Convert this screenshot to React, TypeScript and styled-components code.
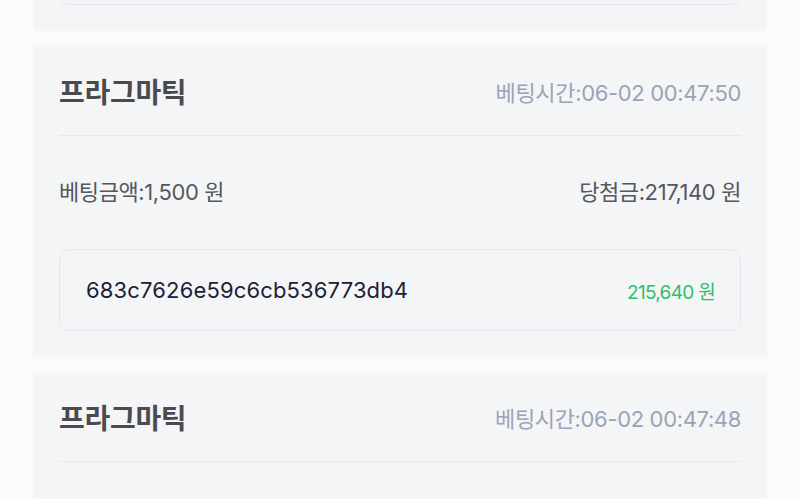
import React from 'react';
import styled, {createGlobalStyle} from "styled-components";

const GlobalStyle = createGlobalStyle`
  html, body {
    margin: 0;
    padding: 0;
    background: #fafbfc;
    overflow: hidden;
  }
  body {
    font-family: Inter, "Noto Sans CJK KR", "Noto Sans", sans-serif;
  }
`

type Bet = {
    id: string;
    game: string;
    time: string;
    stake: string;
    prize: string;
    win: string;
}

const bets: Bet[] = [
    {id: "683c7626e59c6cb536773db5", game: "프라그마틱", time: "06-02 00:47:52", stake: "1,500", prize: "3,000", win: "1,500"},
    {id: "683c7626e59c6cb536773db4", game: "프라그마틱", time: "06-02 00:47:50", stake: "1,500", prize: "217,140", win: "215,640"},
    {id: "683c7620e59c6cb536773da1", game: "프라그마틱", time: "06-02 00:47:48", stake: "1,500", prize: "0", win: "0"},
];

const App = () => {
    return (
        <>
            <GlobalStyle/>
            <Page>
                <List>
                    {bets.map((bet) => (
                        <Card key={bet.id}>
                            <CardHeader>
                                <Title>{bet.game}</Title>
                                <Time>베팅시간:{bet.time}</Time>
                            </CardHeader>
                            <AmountRow>
                                <Amount>베팅금액:{bet.stake} 원</Amount>
                                <Amount>당첨금:{bet.prize} 원</Amount>
                            </AmountRow>
                            <TxBox>
                                <TxId>{bet.id}</TxId>
                                <Win>{bet.win} 원</Win>
                            </TxBox>
                        </Card>
                    ))}
                </List>
            </Page>
        </>
    );
};

const Page = styled.div`
  width: 800px;
  height: 499px;
  overflow: hidden;
  padding: 0 33px;
  box-sizing: border-box;
`

const List = styled.div`
  display: flex;
  flex-direction: column;
  gap: 16px;
  margin-top: -279px;
`

const Card = styled.section`
  background: #f4f5f7;
  padding: 0 26px 26px;
  display: flex;
  flex-direction: column;
`

const CardHeader = styled.div`
  display: flex;
  justify-content: space-between;
  align-items: center;
  height: 88px;
  border-bottom: 1px solid #e6e9ed;
`

const Title = styled.h2`
  margin: 0;
  font-size: 28px;
  font-weight: 700;
  letter-spacing: -0.3px;
  color: #4a4b4f;
`

const Time = styled.span`
  font-size: 22px;
  letter-spacing: -0.35px;
  color: #9aa4b6;
`

const AmountRow = styled.div`
  display: flex;
  justify-content: space-between;
  align-items: center;
  height: 108px;
  margin-bottom: 5px;
`

const Amount = styled.span`
  font-size: 22px;
  letter-spacing: -0.4px;
  color: #55585e;
`

const TxBox = styled.div`
  display: flex;
  justify-content: space-between;
  align-items: center;
  height: 82px;
  box-sizing: border-box;
  padding: 0 25px 0 26px;
  border: 1px solid #e4e7eb;
  border-radius: 10px;
`

const TxId = styled.span`
  font-size: 22px;
  letter-spacing: 0.15px;
  color: #1e2133;
`

const Win = styled.span`
  font-size: 19px;
  letter-spacing: -0.7px;
  color: #2fbf66;
`

export default App;
